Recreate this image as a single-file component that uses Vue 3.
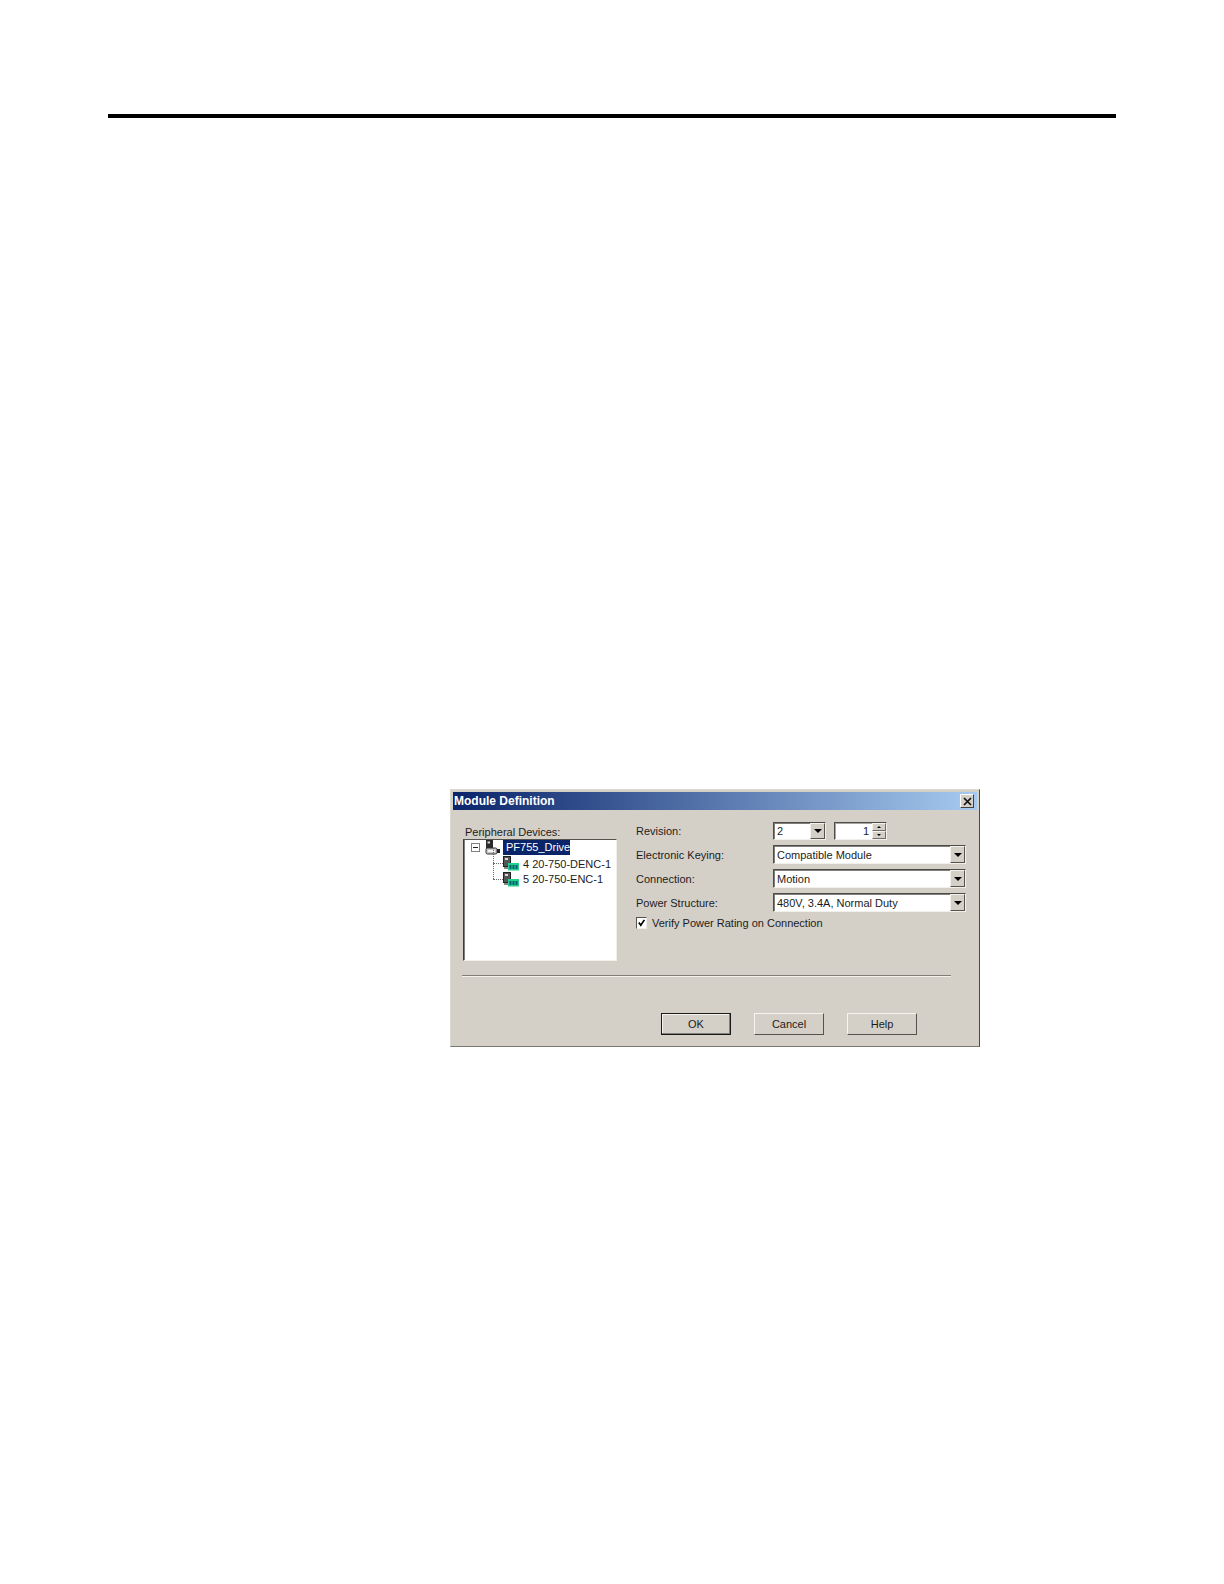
<script setup>
const children = [
  { id: 1, label: '4 20-750-DENC-1' },
  { id: 2, label: '5 20-750-ENC-1' }
]
const wideSelects = [
  { label: 'Electronic Keying:', value: 'Compatible Module' },
  { label: 'Connection:', value: 'Motion' },
  { label: 'Power Structure:', value: '480V, 3.4A, Normal Duty' }
]
const buttons = [
  { label: 'OK', primary: true },
  { label: 'Cancel', primary: false },
  { label: 'Help', primary: false }
]
</script>

<template>
  <div class="page">
    <div class="rule"></div>
    <section class="dialog">
      <header class="title">
        <span>Module Definition</span>
        <button class="close" aria-label="Close">
          <svg width="9" height="9" viewBox="0 0 9 9"><path d="M1 1l7 7M8 1L1 8" stroke="#111" stroke-width="1.7" fill="none"/></svg>
        </button>
      </header>

      <div class="body">
        <div class="left">
          <div class="tree-label">Peripheral Devices:</div>
          <div class="tree">
            <div class="root-row">
              <span class="expander"><i></i></span>
              <svg class="drive" width="15" height="15" viewBox="0 0 15 15">
                <rect x="1" y="0" width="7" height="9" fill="#2b2b2b"/>
                <rect x="2.5" y="1.5" width="2.5" height="2" fill="#d8d8d8"/>
                <rect x="1" y="8" width="11" height="6" rx="1.5" fill="#c8c8c8" stroke="#333" stroke-width="1"/>
                <rect x="3" y="10" width="7" height="2" fill="#f4f4f4"/>
                <rect x="12" y="9" width="3" height="4" fill="#222"/>
              </svg>
              <span class="selected">PF755_Drive</span>
            </div>
            <div v-for="c in children" :key="c.id" class="child-row">
              <svg class="module" width="16" height="15" viewBox="0 0 16 15">
                <rect x="0.5" y="0.5" width="7" height="10" fill="#555" stroke="#222"/>
                <rect x="2" y="2" width="3" height="2" fill="#d8d8d8"/>
                <rect x="1" y="11" width="6" height="2" fill="#888"/>
                <rect x="5" y="7" width="11" height="7.5" fill="#22d08a"/>
                <rect x="6.5" y="9" width="2" height="4" fill="#0b5a78"/>
                <rect x="9.5" y="9" width="2" height="4" fill="#0b5a78"/>
                <rect x="12.5" y="9" width="2" height="4" fill="#0b5a78"/>
              </svg>
              <span>{{ c.label }}</span>
            </div>
          </div>
        </div>

        <div class="right">
          <label class="field-label">Revision:</label>
          <div class="revision">
            <div class="select small">
              <span class="value">2</span>
              <span class="arrow-btn"><i class="arrow"></i></span>
            </div>
            <div class="spinner">
              <span class="spin-value">1</span>
              <span class="spin-btns">
                <span class="spin-btn"><i class="mini up"></i></span>
                <span class="spin-btn"><i class="mini down"></i></span>
              </span>
            </div>
          </div>

          <template v-for="s in wideSelects" :key="s.label">
            <label class="field-label">{{ s.label }}</label>
            <div class="select">
              <span class="value">{{ s.value }}</span>
              <span class="arrow-btn"><i class="arrow"></i></span>
            </div>
          </template>

          <div class="check-row">
            <span class="check">
              <svg width="10" height="10" viewBox="0 0 10 10"><path d="M2 4.5l2.2 3L8.2 1.5" stroke="#000" stroke-width="1.9" fill="none"/></svg>
            </span>
            <span>Verify Power Rating on Connection</span>
          </div>
        </div>
      </div>

      <div class="separator"></div>

      <footer class="actions">
        <button v-for="b in buttons" :key="b.label" class="btn" :class="{ primary: b.primary }">{{ b.label }}</button>
      </footer>
    </section>
  </div>
</template>

<style>
html, body { background: #ffffff; }
</style>

<style scoped>
.page {
  width: 1224px;
  height: 1584px;
  padding-top: 114px;
  box-sizing: border-box;
  background: #fff;
  overflow: hidden;
  font-family: "Liberation Sans", Arial, sans-serif;
  font-size: 11px;
  color: #1c1c1c;
}
.rule {
  width: 1008px;
  height: 4px;
  margin-left: 108px;
  background: #000;
}
.dialog {
  width: 530px;
  height: 258px;
  margin: 671px 0 0 450px;
  box-sizing: border-box;
  padding: 2px;
  background: #d4d0c8;
  border-top: 1px solid #dcd9cf;
  border-left: 1px solid #dcd9cf;
  border-right: 1px solid #4a4a46;
  border-bottom: 1px solid #77766f;
}
.title {
  height: 18px;
  display: flex;
  align-items: center;
  justify-content: space-between;
  padding: 0 2px 0 1px;
  background: linear-gradient(90deg, #0a246a, #a6caf0);
  color: #fff;
  font-weight: bold;
  font-size: 12px;
}
.close {
  width: 14px;
  height: 14px;
  margin-right: 1px;
  padding: 0;
  display: flex;
  align-items: center;
  justify-content: center;
  background: #d4d0c8;
  border: 1px solid;
  border-color: #fff #404040 #404040 #fff;
}
.body {
  display: flex;
  gap: 19px;
  padding: 12px 0 0 10px;
  height: 151px;
  box-sizing: border-box;
}
.left {
  width: 154px;
  padding-top: 3px;
}
.tree-label {
  height: 14px;
  line-height: 14px;
  padding-left: 2px;
  white-space: nowrap;
}
.tree {
  height: 122px;
  box-sizing: border-box;
  background: #fff;
  border: 1px solid;
  border-color: #55534e #f2f0ea #f2f0ea #3c3b38;
  box-shadow: inset 1px 0 0 #808080;
}
.root-row {
  display: flex;
  align-items: center;
  height: 15px;
  padding-left: 7px;
  margin-bottom: 1px;
}
.expander {
  width: 9px;
  height: 9px;
  box-sizing: border-box;
  border: 1px solid #808080;
  display: flex;
  align-items: center;
  justify-content: center;
}
.expander i {
  width: 5px;
  height: 1px;
  background: #222;
}
.drive {
  margin-left: 5px;
}
.selected {
  margin-left: 3px;
  width: 67px;
  height: 15px;
  line-height: 15px;
  padding-left: 3px;
  box-sizing: border-box;
  background: #0a246a;
  color: #fff;
  white-space: nowrap;
}
.child-row {
  position: relative;
  display: flex;
  align-items: center;
  gap: 4px;
  height: 15.5px;
  margin-left: 39px;
  white-space: nowrap;
}
.child-row::before {
  content: "";
  position: absolute;
  left: -10px;
  top: 7px;
  width: 10px;
  border-top: 1px dotted #666;
}
.child-row::after {
  content: "";
  position: absolute;
  left: -10px;
  top: -8px;
  height: 15px;
  border-left: 1px dotted #666;
}
.right {
  width: 330px;
  display: grid;
  grid-template-columns: 137px 193px;
  grid-template-rows: 18px 19px 19px 19px 12px;
  row-gap: 5px;
  align-items: center;
}
.field-label {
  white-space: nowrap;
}
.revision {
  display: flex;
  gap: 8px;
  height: 18px;
}
.select, .spinner {
  height: 100%;
  box-sizing: border-box;
  display: flex;
  align-items: center;
  background: #fff;
  border: 1px solid;
  border-color: #4d4c48 #f2f0ea #f2f0ea #4d4c48;
  box-shadow: inset 1px 1px 0 #807e78;
}
.select {
  justify-content: space-between;
}
.select.small {
  width: 53px;
}
.value {
  padding-left: 3px;
  white-space: nowrap;
}
.arrow-btn {
  width: 15px;
  height: 100%;
  box-sizing: border-box;
  display: flex;
  align-items: center;
  justify-content: center;
  background: #d4d0c8;
  border: 1px solid;
  border-color: #f4f2ec #55534e #55534e #f4f2ec;
}
.arrow {
  width: 0;
  height: 0;
  border-left: 4px solid transparent;
  border-right: 4px solid transparent;
  border-top: 4px solid #000;
}
.spinner {
  width: 53px;
  justify-content: flex-end;
  box-shadow: inset 1px 1px 0 #a8a69f;
}
.spin-value {
  padding-right: 3px;
}
.spin-btns {
  width: 14px;
  height: 100%;
  display: flex;
  flex-direction: column;
}
.spin-btn {
  flex: 1;
  display: flex;
  align-items: center;
  justify-content: center;
  background: #d4d0c8;
  border: 1px solid;
  border-color: #f4f2ec #706e68 #706e68 #f4f2ec;
}
.mini {
  width: 0;
  height: 0;
  border-left: 2px solid transparent;
  border-right: 2px solid transparent;
}
.mini.up { border-bottom: 2px solid #000; }
.mini.down { border-top: 2px solid #000; }
.check-row {
  grid-column: 1 / -1;
  display: flex;
  align-items: center;
  gap: 5px;
  white-space: nowrap;
}
.check {
  width: 11px;
  height: 12px;
  box-sizing: border-box;
  display: flex;
  align-items: center;
  justify-content: center;
  background: #fff;
  border: 1px solid;
  border-color: #55534e #eeece6 #eeece6 #55534e;
}
.separator {
  width: 489px;
  height: 2px;
  margin: 14px 0 0 9px;
  box-sizing: border-box;
  border-top: 1px solid #807e78;
  border-bottom: 1px solid #f4f2ec;
}
.actions {
  display: flex;
  gap: 23px;
  margin-top: 36px;
  padding-left: 208px;
}
.btn {
  width: 70px;
  height: 22px;
  padding: 0;
  box-sizing: border-box;
  font-family: "Liberation Sans", Arial, sans-serif;
  font-size: 11px;
  color: #1c1c1c;
  background: #d4d0c8;
  border: 1px solid;
  border-color: #f6f4ee #55534e #55534e #f6f4ee;
}
.btn.primary {
  border-color: #1a1a1a;
  box-shadow: inset -1px -1px 0 #807e78, inset 1px 1px 0 #f6f4ee;
}
</style>
